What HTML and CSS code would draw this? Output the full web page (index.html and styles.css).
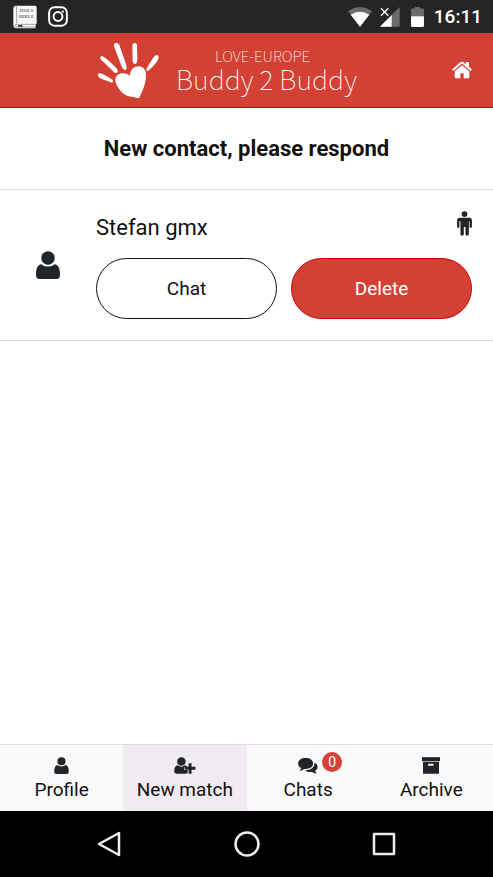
FILE: index.html
```html
<!DOCTYPE html>
<html lang="en">
<head>
<meta charset="utf-8">
<meta name="viewport" content="width=device-width, initial-scale=1">
<title>Buddy 2 Buddy</title>
<link rel="stylesheet" href="styles.css">
</head>
<body>
<svg class="defs" aria-hidden="true">
  <symbol id="person" viewBox="0 0 24 28">
    <circle cx="12" cy="7" r="6.7"/>
    <path d="M5.5 13.2C8.8 16.4 15.2 16.4 18.500 13.200C22 13.600 24 17 24 23.500Q24 28 20.500 28H3.500Q0 28 0 23.500C0 17 2 13.600 5.500 13.200Z"/>
  </symbol>
</svg>
<div class="status-bar">
  <div class="status-group apps">
    <svg class="bible" viewBox="0 0 72 72" aria-label="Holy Bible">
      <path d="M10 2H66Q71 2 71 7V55Q66 58 68 67Q68 70 64 70H10Q1 70 1 61V10Q1 2 10 2Z" fill="#f8f8f8"/>
      <path d="M11 2V54M7 58H67M7 66H67M7 58Q3 62 7 66" fill="none" stroke="#777" stroke-width="2"/>
      <path d="M16 60H28V67L22 64L16 67Z" fill="#222"/>
      <g class="bible-text"><text x="41" y="22">HOLY</text><text x="41" y="39">BIBLE</text></g>
    </svg>
    <svg class="insta" viewBox="0 0 60 64" fill="none" stroke="#fff" stroke-width="6">
      <rect x="3" y="4" width="54" height="56" rx="16"/><circle cx="30" cy="32" r="13.500"/><circle cx="45" cy="17" r="3.500" fill="#fff" stroke="none"/>
    </svg>
  </div>
  <div class="status-group signals">
    <svg class="wifi" viewBox="0 0 72 60"><path d="M0 13Q36-13 72 13L36 59Z" fill="#6b6b6b"/><path d="M8 23Q36 5 64 23L36 59Z" fill="#fff"/></svg>
    <svg class="cell" viewBox="0 0 60 60"><path d="M59 0V59H0Z" fill="#6b6b6b"/><path d="M35 24V59H0Z" fill="#fff"/><path d="M-4-4H30V29H-4Z" fill="#252525"/><path d="M3 4L25 26M25 4L3 26" stroke="#fff" stroke-width="4"/></svg>
    <svg class="battery" viewBox="0 0 40 62"><path d="M12 0H28V5H37Q40 5 40 9V29H0V9Q0 5 3 5H12Z" fill="#6b6b6b"/><path d="M0 29H40V58Q40 62 36 62H4Q0 62 0 58Z" fill="#fff"/></svg>
    <time>16:11</time>
  </div>
</div>
<header class="header">
  <div class="brand">
    <svg class="hand" viewBox="0 0 192 180" fill="#fff" aria-hidden="true">
      <path d="M129 175C110 169 92 171 80 159C68 147 58 131 58 119C59 101 82 93 102 107C103 88 115 79 128 79C143 80 151 92 150 106C150 132 138 157 129 175Z"/>
      <path d="M9 99Q17 98 50 120Q53 125 48 128Q18 119 9 112Q3 103 9 99Z"/>
      <path d="M16 48Q23 46 60 83Q68 92 65 97Q61 102 54 97L17 61Q9 53 16 48Z"/>
      <path d="M57 10Q65 6 70 15L89 70Q94 85 90 89Q84 92 78 82L56 24Q51 14 57 10Z"/>
      <path d="M117 9Q125 10 123 24Q126 65 121 70Q114 75 110 65L109 21Q108 9 117 9Z"/>
      <path d="M185 46Q192 51 182 66Q166 86 157 92Q149 96 151 87L171 54Q179 43 185 46Z"/>
    </svg>
    <div class="brand-name"><span class="brand-top">LOVE-EUROPE</span><span class="brand-main">Buddy 2 Buddy</span></div>
  </div>
  <a class="home" href="#" aria-label="Home">
    <svg viewBox="0 0 60 54" fill="#fff"><path d="M30 13L8 31V49Q8 52 11 52H25V37H35V52H49Q52 52 52 49V31Z"/><path d="M2 28L26 7Q30 3 34 7L58 28" fill="none" stroke="#fff" stroke-width="6"/><path d="M42 3H51V24L42 15Z"/></svg>
  </a>
</header>
<main>
  <h1 class="title">New contact, please respond</h1>
  <section class="contact">
    <svg class="avatar" aria-hidden="true"><use href="#person"/></svg>
    <div class="contact-body">
      <div class="contact-head">
        <h2 class="contact-name">Stefan gmx</h2>
        <svg class="male" viewBox="0 0 44 74" aria-label="Male"><circle cx="22" cy="9" r="8.500"/><path d="M8 20H36Q44 20 44 28V46Q44 50 40 50Q37 50 37 46V30H35V69Q35 73 30 73Q25 73 25 69V47H20V69Q20 73 15 73Q10 73 10 69V30H7V46Q7 50 4 50Q0 50 0 46V28Q0 20 8 20Z"/></svg>
      </div>
      <div class="actions">
        <button class="button" type="button">Chat</button>
        <button class="button danger" type="button">Delete</button>
      </div>
    </div>
  </section>
</main>
<nav class="tabs">
  <a class="tab" href="#"><svg class="tab-icon profile"><use href="#person"/></svg>Profile</a>
  <a class="tab active" href="#">
    <svg class="tab-icon match" viewBox="0 0 66 52"><circle cx="22" cy="14" r="13"/><path d="M11 25Q22 34 33 25L40 29V31H31V40H41V49Q39 51 34 51H8Q0 51 0 43Q0 26 11 25Z"/><path d="M44 19H53V30H65V39H53V51H44V39H33V30H44Z"/></svg>New match</a>
  <a class="tab" href="#">
    <span class="icon-wrap"><svg class="tab-icon chats" viewBox="0 0 58 50"><path d="M51 18C60 26 59 36 50 40Q51 45 55 48Q48 49 41 44Q27 46 20 39C37 40 49 31 48 17Z"/><path d="M22 3C35 3 44 9 44 19S35 35 22 35H18Q10 41 4 40Q8 37 9 32Q0 28 0 19C0 9 9 3 22 3Z"/></svg><span class="badge">0</span></span>Chats</a>
  <a class="tab" href="#">
    <svg class="tab-icon archive" viewBox="0 0 54 50"><path d="M0 0H54V12H0Z"/><path fill-rule="evenodd" d="M3 14H51V50H3ZM20 20Q18 20 18 23T20 26H33Q35 26 35 23T33 20Z"/></svg>Archive</a>
</nav>
<footer class="system-nav">
  <button type="button" aria-label="Back"><svg viewBox="0 0 28 28"><path d="M3 14L23 3V25Z"/></svg></button>
  <button type="button" aria-label="Home"><svg viewBox="0 0 28 28"><circle cx="14" cy="14" r="11.500"/></svg></button>
  <button type="button" aria-label="Recent apps"><svg viewBox="0 0 28 28"><rect x="4" y="4" width="20" height="20"/></svg></button>
</footer>
</body>
</html>
```
FILE: styles.css
```css
* { box-sizing: border-box; }
body {
  margin: 0;
  min-height: 100vh;
  display: flex;
  flex-direction: column;
  background: #fff;
  color: #111;
  font: 19px/28px Roboto, sans-serif;
}
a { color: inherit; text-decoration: none; }
button { font: inherit; cursor: pointer; }
svg { display: block; flex: none; }
.defs { display: none; }
main { flex: 1; }

.status-bar {
  height: 33px;
  padding: 0 11px 0 13px;
  display: flex;
  align-items: center;
  justify-content: space-between;
  background: #252525;
  color: #fff;
}
.status-group { display: flex; align-items: center; }
.apps { gap: 11px; }
.bible { width: 24px; height: 24px; }
.bible-text { font: bold 15px "Liberation Serif", serif; fill: #777; text-anchor: middle; }
.insta { width: 20px; height: 21px; }
.wifi { width: 24px; height: 20px; margin-right: 8px; }
.cell { width: 20px; height: 20px; margin-right: 11px; }
.battery { width: 13px; height: 20px; margin-right: 10px; }
.status-bar time { font-weight: 500; }

.header {
  height: 75px;
  padding: 0 21px 0 96px;
  display: flex;
  align-items: center;
  justify-content: space-between;
  background: #d34134;
  border-bottom: 1px solid #c00;
  color: #fff;
}
.brand { display: flex; align-items: center; gap: 16px; }
.hand { width: 64px; height: 60px; }
.brand-name {
  display: flex;
  flex-direction: column;
  align-items: center;
  padding-bottom: 2px;
  font-family: "Noto Sans CJK JP", sans-serif;
  font-weight: 100;
}
.brand-top { padding-right: 8px; font-size: 15px; line-height: 20px; }
.brand-main { font-size: 27px; line-height: 26px; }
.home svg { width: 20px; height: 18px; }

.title {
  margin: 0;
  padding: 27px 20px 26px;
  border-bottom: 1px solid #ddd;
  font-size: 22px;
  font-weight: 700;
  line-height: 28px;
  text-align: center;
}
.contact {
  padding: 21px 21px 21px 36px;
  display: flex;
  align-items: center;
  gap: 36px;
  border-bottom: 1px solid #ddd;
}
.avatar { width: 24px; height: 28px; fill: #212529; }
.contact-body { flex: 1; }
.contact-head { display: flex; justify-content: space-between; margin-bottom: 16px; }
.contact-name { margin: 0; padding-top: 3px; font-size: 22px; font-weight: 400; line-height: 28px; }
.male { width: 15px; height: 25px; fill: #212529; }
.actions { display: grid; grid-template-columns: 1fr 1fr; gap: 14px; }
.button {
  height: 61px;
  border: 1px solid #111;
  border-radius: 31px;
  background: #fff;
  color: #111;
}
.danger { background: #d34134; border-color: #c00; color: #fff; }

.tabs {
  display: grid;
  grid-template-columns: repeat(4, 1fr);
  background: #f9f9f9;
  border-top: 1px solid #ddd;
}
.tab {
  height: 66px;
  padding-top: 12px;
  display: flex;
  flex-direction: column;
  align-items: center;
  gap: 2px;
}
.active { background: #f0ebf1; }
.tab-icon { height: 17px; fill: #212529; }
.profile { width: 15px; }
.match { width: 22px; }
.chats { width: 20px; }
.archive { width: 18px; }
.icon-wrap { position: relative; }
.badge {
  position: absolute;
  left: 24px;
  top: -5px;
  width: 20px;
  height: 20px;
  border-radius: 50%;
  background: #d34134;
  color: #fff;
  font-size: 14px;
  line-height: 20px;
  text-align: center;
}

.system-nav {
  height: 66px;
  padding: 0 41px;
  display: grid;
  grid-template-columns: repeat(3, 1fr);
  place-items: center;
  background: #000;
}
.system-nav button { padding: 0; border: 0; background: none; }
.system-nav svg { width: 28px; height: 28px; fill: none; stroke: #eee; stroke-width: 2.5; stroke-linejoin: round; }
```
